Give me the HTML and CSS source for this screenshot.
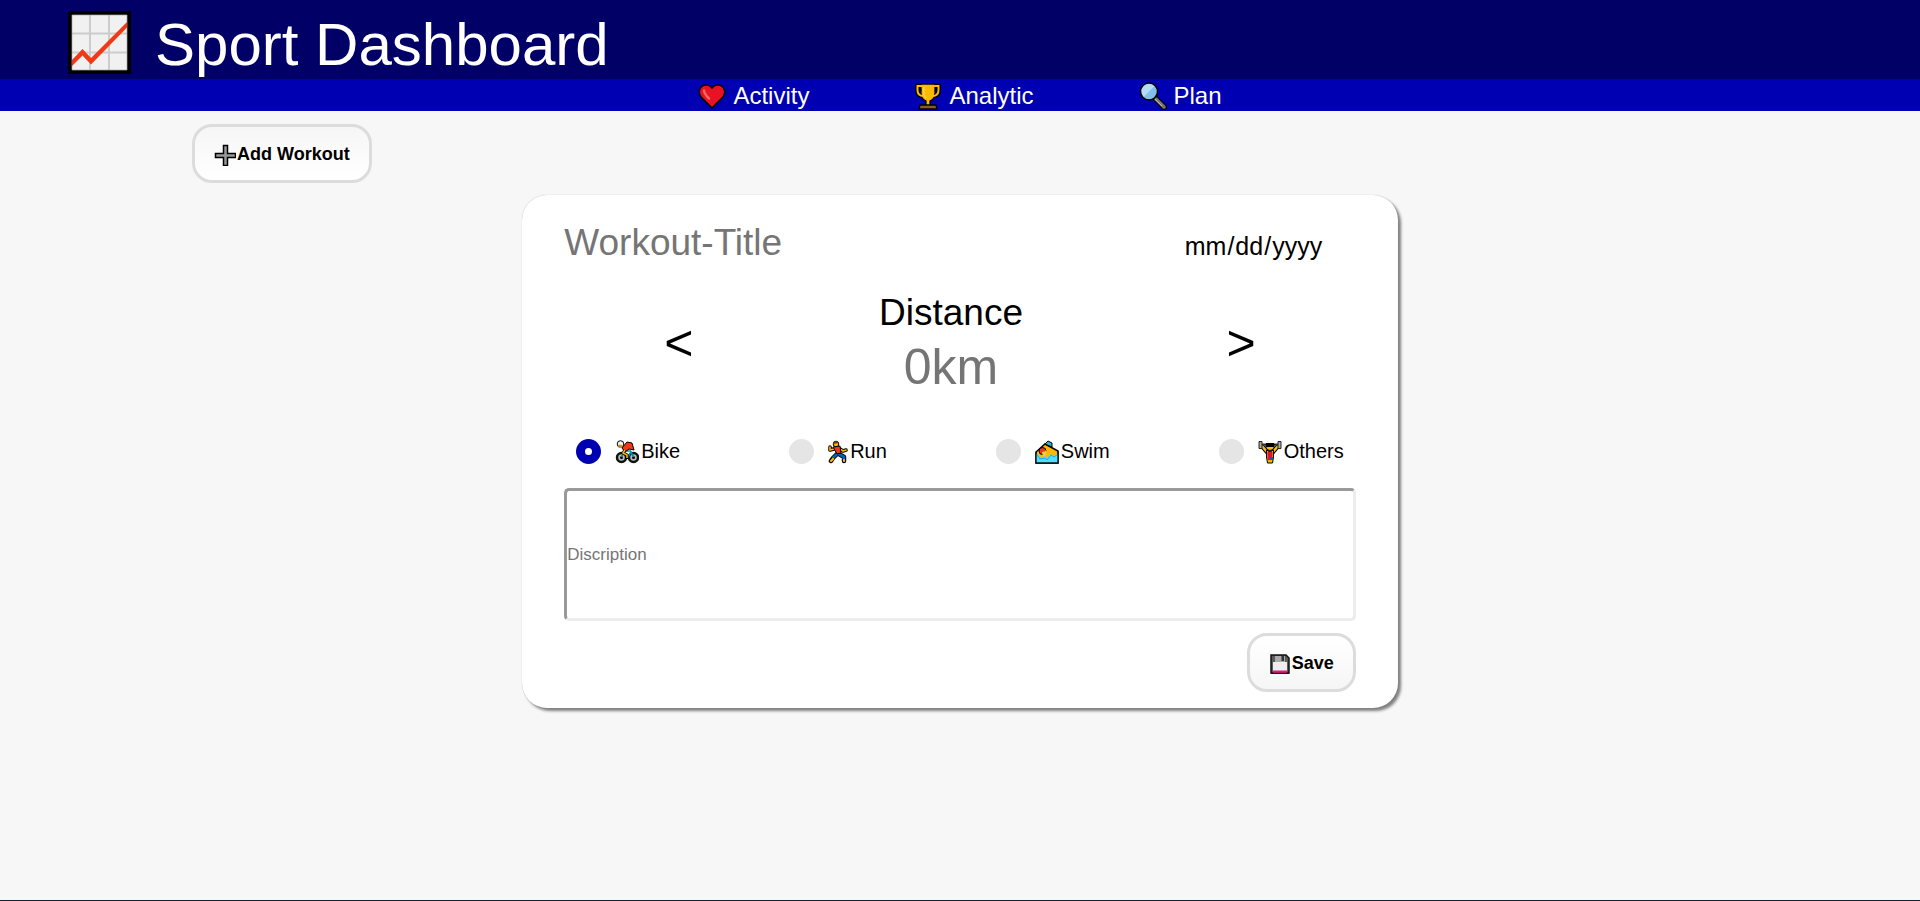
FILE: index.html
```html
<!DOCTYPE html>
<html lang="en">
<head>
<meta charset="utf-8">
<title>Sport Dashboard</title>
<link rel="stylesheet" href="styles.css">
</head>
<body>
<header class="header">
  <svg class="header-logo" viewBox="0 0 63 63" aria-hidden="true">
    <rect width="63" height="63"/>
    <rect x="4" y="4" width="55" height="55" fill="#f1f1f1"/>
    <path d="M22 4v55M41 4v55M4 22.500h55M4 41.500h55" stroke="#ccc" stroke-width="2" fill="none"/>
    <path d="M4 4h55v55H4z" stroke="#aaa" stroke-width=".7" fill="none"/>
    <path d="M4 49 14.500 38 23 47 59 11V16.500L23 53.500 14.500 44.500 4 55z" fill="#f03a17"/>
  </svg>
  <h1 class="header-title">Sport Dashboard</h1>
</header>
<nav class="nav">
  <a class="nav-link" href="#activity">
    <svg class="nav-icon" viewBox="0 0 28 28" aria-hidden="true"><path d="M14 26 3 15C-1 9 3 2 9 3c3 0 4 2 5 3 1-1 2-3 5-3 6-1 10 6 6 12z" fill="#e81224" stroke="#000" stroke-width="1.500"/><path d="M6 8.500q0 3 5 8" fill="none" stroke="#f4685c" stroke-width="2.500" stroke-linecap="round"/></svg>
    Activity
  </a>
  <a class="nav-link" href="#analytic">
    <svg class="nav-icon" viewBox="0 0 28 28" aria-hidden="true"><path d="M8 4H3.500v4q0 6 6 6M20 4h4.500v4q0 6-6 6" fill="none" stroke="#000" stroke-width="4.500"/><path d="M7 2h14v9q0 6-5 8v5h-4v-5q-5-2-5-8z" fill="#ffb900" stroke="#000" stroke-width="1.300"/><path d="M8 4H3.500v4q0 6 6 6M20 4h4.500v4q0 6-6 6" fill="none" stroke="#ffb900" stroke-width="2"/><path d="M10 5v7q0 2 2 4" stroke="#ffd45a" stroke-width="1.500" fill="none"/><path d="M6 23h16l1 4H5z" fill="#8e562e" stroke="#000" stroke-width="1.300"/></svg>
    Analytic
  </a>
  <a class="nav-link" href="#plan">
    <svg class="nav-icon" viewBox="0 0 28 28" aria-hidden="true"><path d="m16 16 9 9" stroke="#000" stroke-width="6" stroke-linecap="round"/><path d="m17 17 8 8" stroke="#767676" stroke-width="3.500" stroke-linecap="round"/><path d="m16 17 7 7" stroke="#bbb" stroke-width="1"/><circle cx="10" cy="9.500" r="8.500" fill="#83beec"/><path d="M4 15.500A8.500 8.500 0 0 1 16 3.500z" fill="#b5daf4"/><circle cx="10" cy="9.500" r="8.500" fill="none" stroke="#000" stroke-width="1.500"/></svg>
    Plan
  </a>
</nav>
<main class="main">
  <button class="button button-add" type="button">
    <svg class="button-icon" viewBox="0 0 22 22" aria-hidden="true"><path d="M9.500 1.500h4v8h8v4h-8v8h-4v-8h-8v-4h8z" fill="#999" stroke="#000" stroke-width="1.500"/></svg>
    Add Workout
  </button>
  <form class="card">
    <div class="card-head">
      <input class="title-input" type="text" placeholder="Workout-Title" aria-label="Workout title">
      <input class="date-input" type="date" aria-label="Workout date">
    </div>
    <div class="metric">
      <button class="arrow" type="button" aria-label="Previous metric">&lt;</button>
      <div class="metric-body">
        <label class="metric-label" for="metric">Distance</label>
        <input class="metric-input" id="metric" type="text" placeholder="0km">
      </div>
      <button class="arrow" type="button" aria-label="Next metric">&gt;</button>
    </div>
    <div class="sports">
      <label class="sport">
        <input class="sport-radio" type="radio" name="sport" value="bike" checked>
        <svg class="sport-icon" viewBox="0 0 24 24" aria-hidden="true"><circle cx="6.500" cy="17.500" r="4.500" fill="#bbb" stroke="#111" stroke-width="2.500"/><circle cx="18.500" cy="17.500" r="4.500" fill="#bbb" stroke="#111" stroke-width="2.500"/><circle cx="6.500" cy="17.500" r="1.500"/><circle cx="18.500" cy="17.500" r="1.500"/><path d="m6.500 17 3-6h6l3 6M9 12l4 5 3-5" fill="none" stroke="#008eaa" stroke-width="1.700"/><path d="m7 8 5-6 5 1 2 7-5-1-4 3z" fill="#f03a17" stroke="#000"/><path d="m10 10-2 3 4 2v4" fill="none" stroke="#000" stroke-width="3"/><path d="m10 10-2 3 4 2v3" fill="none" stroke="#ffb900" stroke-width="1.500"/><circle cx="5.500" cy="4" r="3.300" fill="#f2f2f2" stroke="#000"/><path d="M3 5q3-1 5 1L6 8Q3 8 3 5z" fill="#c98a2b"/></svg>
        Bike
      </label>
      <label class="sport">
        <input class="sport-radio" type="radio" name="sport" value="run">
        <svg class="sport-icon sport-icon-slim" viewBox="0 0 20 24" aria-hidden="true"><g stroke-linejoin="round" stroke-linecap="round" fill="none"><path d="m6 9-4 1V7M12 9l3 2 3-1" stroke="#000" stroke-width="3.500"/><path d="m9 14-4 4-2 3M11 14l5 3v4" stroke="#000" stroke-width="4.500"/><path d="m6 9-4 1V7M12 9l3 2 3-1" stroke="#ffb900" stroke-width="1.700"/><path d="m9 14-4 4M11 14l5 3v2" stroke="#0063b1" stroke-width="2.700"/><path d="m5 19-2 2M16 20v1" stroke="#ffb900" stroke-width="2.200"/></g><path d="m5 7 7-1 1 7-4 1z" fill="#f03a17" stroke="#000"/><circle cx="8" cy="4" r="2.800" fill="#ffb900" stroke="#000"/><path d="M5 4q0-3 4-3l2 2z" fill="#6b3f18"/></svg>
        Run
      </label>
      <label class="sport">
        <input class="sport-radio" type="radio" name="sport" value="swim">
        <svg class="sport-icon" viewBox="0 0 24 24" aria-hidden="true"><path d="M1 12 10 4l13 7v12H1z" fill="#ffb900" stroke="#000" stroke-width="1.500"/><path d="m10 4 3-3 4 2v4z" fill="#26b7d9" stroke="#000"/><circle cx="7.500" cy="11" r="3.500" fill="#e83b16" stroke="#000"/><path d="M7 12q3 0 4-2l1 4-4 3z" fill="#ffc83d"/><path d="m1 14 3 1 2 3 4-2 2 2 4-4 3 2 4-2v9H1z" fill="#50dfff"/><path d="m2 15 3 4 5-1 2 2 4-5 3 2 3-2" stroke="#1caeea" fill="none"/><path d="M1 12v11h22V11" fill="none" stroke="#111" stroke-width="1.300"/></svg>
        Swim
      </label>
      <label class="sport">
        <input class="sport-radio" type="radio" name="sport" value="others">
        <svg class="sport-icon" viewBox="0 0 24 24" aria-hidden="true"><path d="M10 13 4 6M14 13l6-7" stroke="#000" stroke-width="4.500"/><path d="M10 13 4 6M14 13l6-7" stroke="#ffb900" stroke-width="2.500"/><path d="M2 4.500h20" stroke="#333" stroke-width="2"/><path d="M1 1.500h3v7H1zM20 1.500h3v7h-3z" fill="#aaa" stroke="#222"/><path d="m8.500 10 3.500 2 3.500-2v7l-1 6h-5l-1-6z" fill="#ffb900" stroke="#000"/><path d="M9.500 12h5v5l-2 3h-3z" fill="#e81224"/><path d="M12 17h3v3h-3z" fill="#0063b1"/><path d="M8 4h8v4q-4 5-8 0z" fill="#ffb900" stroke="#000"/><path d="M8 3h8v4H8z"/></svg>
        Others
      </label>
    </div>
    <input class="description" type="text" placeholder="Discription" aria-label="Description">
    <button class="button button-save" type="submit">
      <svg class="button-icon" viewBox="0 0 22 22" aria-hidden="true"><path d="M2 2h15l3 3v15H2z" fill="#5b5b5b" stroke="#111" stroke-width="1.500"/><path d="M6 3h10v6H6z" fill="#aaa"/><path d="M12.500 3h2.500v5h-2.500z" fill="#333"/><path d="M4 9h14v11H4z" fill="#eee"/><path d="M4 17.500h14V20H4z" fill="#e3197a"/><path d="M2 20.300h18" stroke="#111"/></svg>
      Save
    </button>
  </form>
</main>
<footer class="footer"></footer>
</body>
</html>
```

FILE: styles.css
```css
* {
  box-sizing: border-box;
}

body {
  margin: 0;
  min-height: 100vh;
  display: flex;
  flex-direction: column;
  background: #f7f7f7;
  color: #000;
  font-family: "Liberation Sans", Arial, sans-serif;
}

input,
button {
  margin: 0;
  padding: 0;
  border: 0;
  background: none;
  color: inherit;
  font-family: inherit;
}

.header {
  display: flex;
  align-items: flex-start;
  gap: 24px;
  padding: 11px 68px 0;
  background: #000066;
  color: #fff;
}

.header-logo {
  width: 63px;
  height: 63px;
}

.header-title {
  margin: 0;
  font-size: 60px;
  font-weight: 400;
  line-height: 68px;
}

.nav {
  display: flex;
  justify-content: center;
  gap: 105px;
  padding-top: 2px;
  background: #0000b3;
}

.nav-link {
  display: flex;
  align-items: center;
  gap: 7px;
  color: #fff;
  font-size: 24px;
  line-height: 30px;
  text-decoration: none;
}

.nav-icon {
  width: 28px;
  height: 28px;
}

.main {
  flex: 1;
  display: flex;
  flex-direction: column;
  gap: 12px;
  padding: 13px 0 24px;
}

.button {
  display: flex;
  align-items: center;
  gap: 1px;
  padding: 17px 19px 15px;
  border: 3px solid #dcdcdc;
  border-radius: 20px;
  font-size: 18px;
  font-weight: 700;
  line-height: 21px;
}

.button-icon {
  width: 22px;
  height: 22px;
  margin: -1px 0;
}

.button-add {
  align-self: flex-start;
  margin-left: 10%;
  background: linear-gradient(#f6f6f6, #fff);
}

.button-save {
  align-self: flex-end;
  margin-top: 12px;
  background: linear-gradient(#fff, #f6f6f6);
}

.card {
  display: flex;
  flex-direction: column;
  align-self: center;
  width: 45.6%;
  min-width: 720px;
  padding: 26px 42px 16px;
  border-radius: 25px;
  background: #fff;
  box-shadow: 3px 3px 3px #808080, 0 0 1px #aaa;
}

.card-head {
  display: flex;
  align-items: baseline;
  justify-content: space-between;
}

.title-input {
  flex: 1;
  min-width: 0;
  height: 43px;
  font-size: 37px;
}

.date-input {
  width: 172px;
  font-size: 25px;
}

.date-input::-webkit-calendar-picker-indicator {
  opacity: 0;
  width: 24px;
  margin: 0;
}

::placeholder {
  color: #757575;
  opacity: 1;
}

.metric {
  display: flex;
  align-items: center;
  justify-content: space-between;
  padding: 27px 100px 44px;
}

.arrow {
  font-size: 50px;
  line-height: 57px;
}

.metric-body {
  display: flex;
  flex-direction: column;
  align-items: center;
  gap: 4px;
  padding-right: 18px;
}

.metric-label {
  font-size: 37px;
  line-height: 43px;
}

.metric-input {
  width: 200px;
  height: 57px;
  font-size: 50px;
  text-align: center;
}

.sports {
  display: flex;
  justify-content: space-between;
  padding: 0 12px 24px;
}

.sport {
  display: flex;
  align-items: center;
  gap: 2px;
  font-size: 20px;
  line-height: 25px;
}

.sport-radio {
  appearance: none;
  width: 25px;
  height: 25px;
  margin-right: 12px;
  border-radius: 50%;
  background: #e5e5e5;
}

.sport-radio:checked {
  border: 9px solid #0000b3;
  background: #fff;
}

.sport-icon {
  width: 24px;
  height: 24px;
}

.sport-icon-slim {
  width: 20px;
}

.description {
  height: 133px;
  border: 3px solid;
  border-color: #999 #ededed #ededed #999;
  border-radius: 5px;
  font-size: 17px;
}

.footer {
  height: 1px;
  background: #0e2336;
}
```
